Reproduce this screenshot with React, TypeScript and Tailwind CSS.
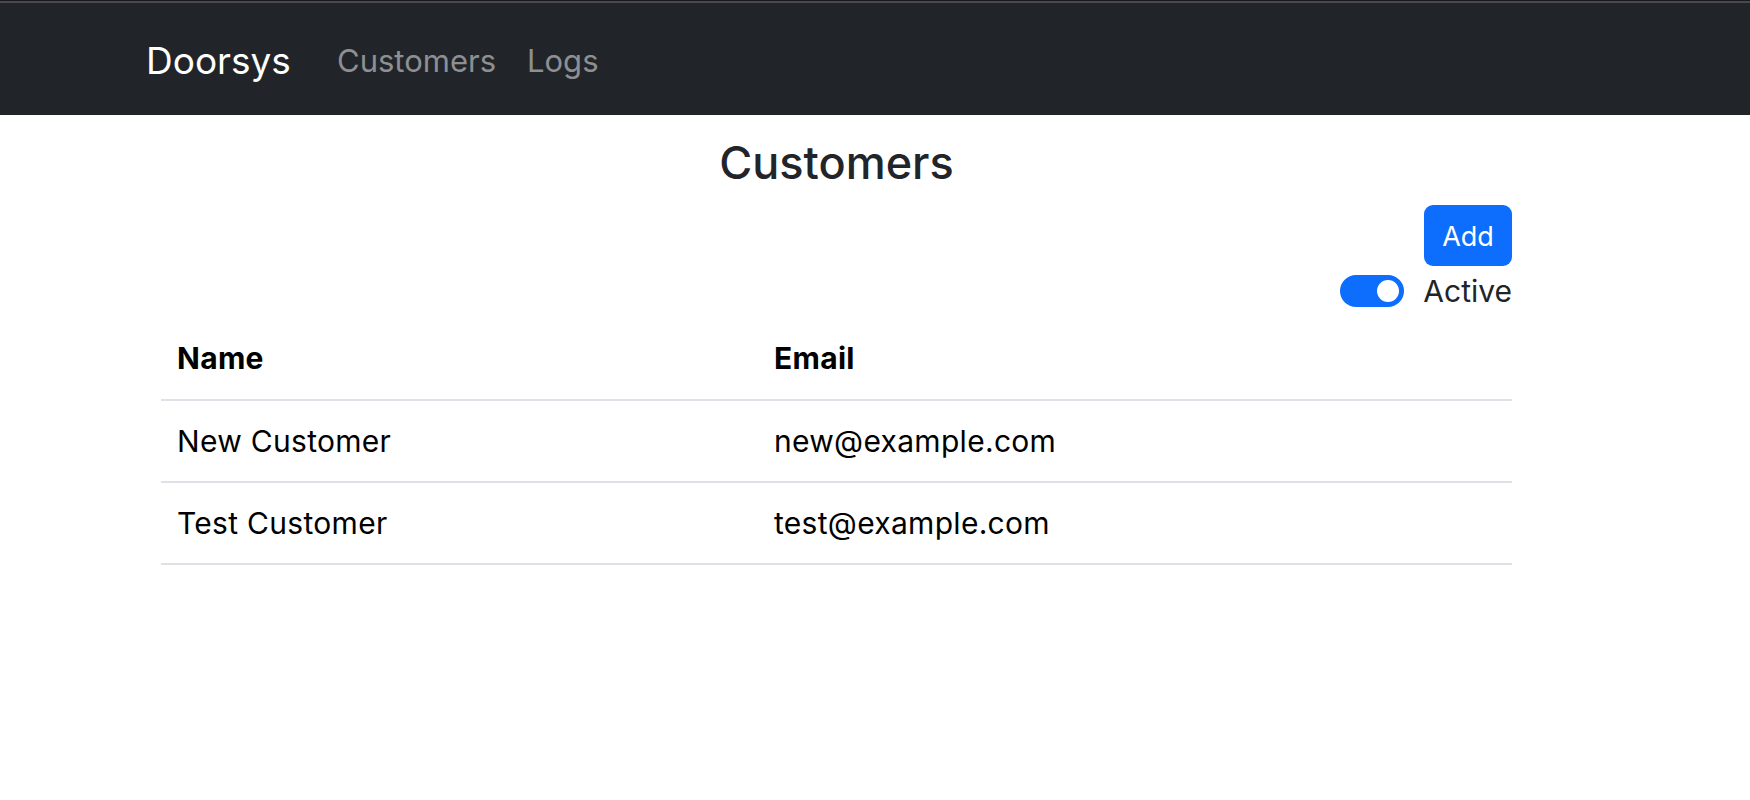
import React, { useState } from 'react';

const customers = [
  { name: 'New Customer', email: 'new@example.com' },
  { name: 'Test Customer', email: 'test@example.com' },
];

function Toggle({ on, onChange }: { on: boolean; onChange: () => void }) {
  return (
    <button
      onClick={onChange}
      className={
        on
          ? 'flex h-[32px] w-[64px] items-center justify-end rounded-full bg-[#0d6efd] px-[5px]'
          : 'flex h-[32px] w-[64px] items-center justify-start rounded-full border-2 border-[#ced4da] bg-white px-[4px]'
      }
    >
      <span className={on ? 'h-[22px] w-[22px] rounded-full bg-white' : 'h-[22px] w-[22px] rounded-full bg-[#ced4da]'} />
    </button>
  );
}

export default function App() {
  const [active, setActive] = useState(true);

  return (
    <div className="min-h-screen bg-white font-['Inter',sans-serif] text-[#212529]">
      <nav className="bg-[#212529]">
        <div className="h-px bg-[#1a1a1e]" />
        <div className="h-[2px] bg-[#4a4950]" />
        <div className="flex h-[112px] items-center pl-[146px] pt-[4px]">
          <a href="#" className="w-[191px] text-[37px] text-white">Doorsys</a>
          <a href="#" className="w-[190px] text-[31px] text-[#8d8f92]">Customers</a>
          <a href="#" className="text-[31px] text-[#8d8f92]">Logs</a>
        </div>
      </nav>

      <main className="ml-[161px] w-[1351px]">
        <h1 className="pt-[19px] text-center text-[45px] font-medium leading-[58px]">Customers</h1>

        <div className="mt-[13px] flex justify-end">
          <button className="h-[61px] w-[88px] rounded-[9px] bg-[#0d6efd] pt-[3px] text-[27px] text-white">Add</button>
        </div>

        <div className="mt-[3px] flex h-[44px] items-center justify-end gap-[19px]">
          <Toggle on={active} onChange={() => setActive(!active)} />
          <span className="text-[30px]">Active</span>
        </div>

        <table className="mt-[5px] w-full border-collapse text-left text-[30px] tracking-[0.3px] text-black">
          <thead>
            <tr className="border-b-2 border-[#dee2e6]">
              <th className="h-[82px] w-[597px] px-[16px] text-[30px] font-bold">Name</th>
              <th className="h-[82px] px-[16px] text-[30px] font-bold">Email</th>
            </tr>
          </thead>
          <tbody>
            {customers.map((c) => (
              <tr key={c.email} className="border-b-2 border-[#dee2e6]">
                <td className="h-[82px] px-[16px]">{c.name}</td>
                <td className="h-[82px] px-[16px]">{c.email}</td>
              </tr>
            ))}
          </tbody>
        </table>
      </main>
    </div>
  );
}
